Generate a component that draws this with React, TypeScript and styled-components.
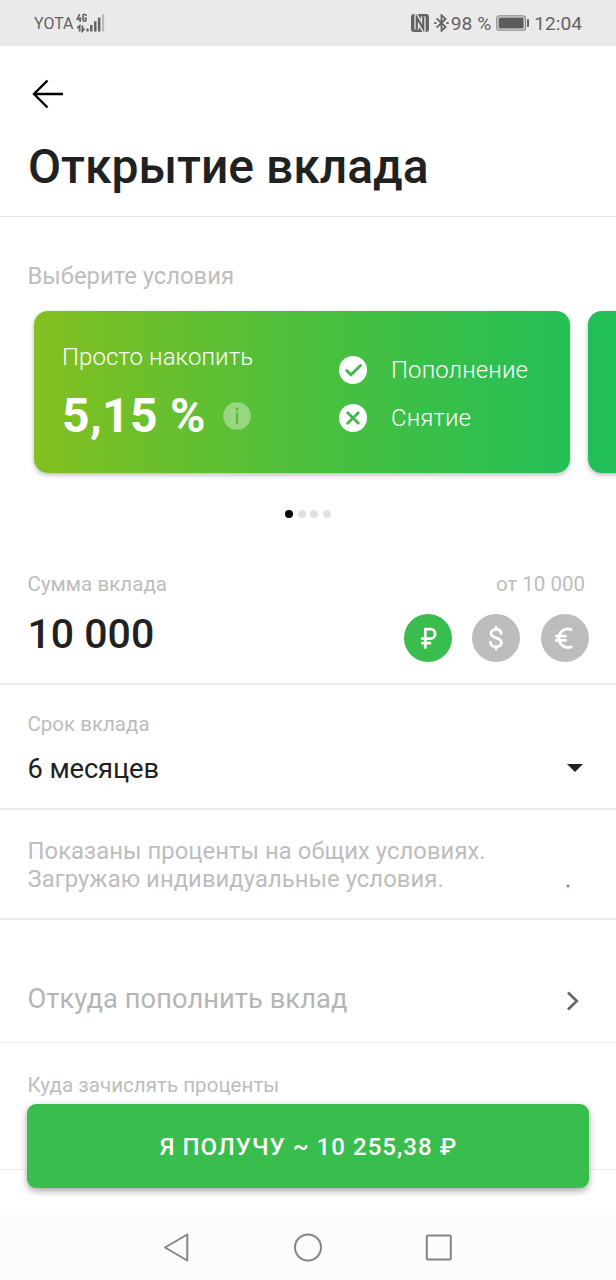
import React from 'react';
import styled, { createGlobalStyle } from 'styled-components';

const GlobalStyle = createGlobalStyle`
  * { box-sizing: border-box; }
  body { margin: 0; background: #fff; font-family: Roboto, "Noto Sans", sans-serif; }
`;

const Screen = styled.div`
  position: relative;
  width: 616px;
  height: 1280px;
  overflow: hidden;
  display: flex;
  flex-direction: column;
  background: #fff;
  color: #212121;
`;

const StatusBar = styled.header`
  height: 46px;
  flex: none;
  display: flex;
  align-items: center;
  justify-content: space-between;
  padding: 0 34px;
  background: #eaeaea;
  color: #636363;
`;

const StatusGroup = styled.div`
  display: flex;
  align-items: center;
`;

const StatusText = styled.span<{ $size: number; $left?: number }>`
  font-size: ${(p) => p.$size}px;
  line-height: 24px;
  margin-left: ${(p) => p.$left ?? 0}px;
  padding-top: 1px;
  white-space: pre;
`;

const SignalIcon = styled.svg`
  margin-left: 2px;
`;

const BluetoothIcon = styled.svg`
  margin-left: 5px;
`;

const BatteryIcon = styled.svg`
  margin-left: 5px;
`;

const Header = styled.div`
  height: 171px;
  flex: none;
  padding: 33px 28px 0;
  border-bottom: 1px solid #e6e6e6;
`;

const BackButton = styled.button`
  display: block;
  border: 0;
  padding: 0;
  margin-left: 4px;
  background: none;
  width: 32px;
  height: 30px;
`;

const Title = styled.h1`
  margin: 30px 0 0;
  font-size: 48px;
  line-height: 56px;
  font-weight: 500;
  white-space: nowrap;
`;

const Caption = styled.div<{ $large?: boolean; $spacing?: number }>`
  font-size: ${(p) => (p.$large ? 23.8 : 20.5)}px;
  line-height: 28px;
  letter-spacing: ${(p) => p.$spacing ?? 0}px;
  color: #bdbdbd;
  white-space: nowrap;
`;

const Hint = styled(Caption)`
  padding-right: 3px;
`;

const Conditions = styled.section`
  height: 330px;
  flex: none;
  padding-top: 45px;
`;

const ConditionsCaption = styled(Caption)`
  padding-left: 27.5px;
`;

const Carousel = styled.div`
  display: flex;
  gap: 17.5px;
  margin-top: 21.3px;
  padding-left: 34px;
`;

const Card = styled.article`
  flex: none;
  width: 536px;
  height: 161.7px;
  border-radius: 14px;
  background: linear-gradient(90deg, #83bf20 0%, #4dbf3c 50%, #24bf56 100%);
  box-shadow: 0 2px 5px rgba(0, 0, 0, 0.28);
  display: flex;
  color: #fff;
`;

const NextCard = styled(Card)`
  background: #22bf58;
`;

const Offer = styled.div`
  width: 305px;
  padding: 31.7px 0 0 28px;
`;

const CardText = styled.div`
  font-size: 24px;
  line-height: 28px;
  font-weight: 300;
  letter-spacing: 0.1px;
  white-space: nowrap;
`;

const RateRow = styled.div`
  display: flex;
  align-items: center;
  gap: 17px;
  margin-top: 17px;
`;

const Rate = styled.span`
  font-size: 48px;
  line-height: 56px;
  font-weight: 700;
  letter-spacing: 0.35px;
  white-space: nowrap;
`;

const Features = styled.div`
  display: flex;
  flex-direction: column;
  gap: 20px;
  padding-top: 44.7px;
`;

const Feature = styled.div`
  display: flex;
  align-items: center;
  gap: 24px;
  height: 28px;
`;

const Dots = styled.div`
  display: flex;
  justify-content: center;
  gap: 4.5px;
  margin-top: 37px;
`;

const Dot = styled.i<{ $active?: boolean }>`
  width: 8px;
  height: 8px;
  border-radius: 50%;
  background: ${(p) => (p.$active ? '#000' : '#e2e2e2')};
`;

const Row = styled.section<{ $height: number; $top: number; $line?: number }>`
  height: ${(p) => p.$height}px;
  flex: none;
  padding: ${(p) => p.$top}px 28px 0 27.5px;
  border-bottom: ${(p) => p.$line ?? 2}px solid #ebebeb;
`;

const Split = styled.div<{ $top?: number; $align?: string }>`
  display: flex;
  justify-content: space-between;
  align-items: ${(p) => p.$align ?? 'center'};
  margin-top: ${(p) => p.$top ?? 0}px;
`;

const Amount = styled.div`
  font-size: 41px;
  line-height: 48px;
  font-weight: 500;
  margin-top: -8px;
`;

const Currencies = styled.div`
  display: flex;
  gap: 20.5px;
  margin-right: -0.8px;
`;

const Currency = styled.button<{ $active?: boolean }>`
  width: 48px;
  height: 48px;
  border: 0;
  padding: 0;
  border-radius: 50%;
  background: ${(p) => (p.$active ? '#39bd4c' : '#bdbdbd')};

  svg {
    display: block;
    fill: none;
    stroke: #fff;
    stroke-width: 2.8;
    stroke-linecap: round;
    stroke-linejoin: round;
  }
`;

const Term = styled.div<{ $muted?: boolean }>`
  font-size: 27.3px;
  line-height: 32px;
  letter-spacing: ${(p) => (p.$muted ? 0.05 : -0.1)}px;
  color: ${(p) => (p.$muted ? '#b5b5b5' : '#212121')};
`;

const DropdownIcon = styled.svg`
  margin: -1px 5px 0 0;
`;

const Loader = styled.svg`
  margin: 0 18.5px 5px 0;
`;

const ChevronIcon = styled.svg`
  margin: 5px 9px 0 0;
`;

const SubmitButton = styled.button`
  position: absolute;
  left: 27px;
  top: 1104px;
  width: 562px;
  height: 83.5px;
  border: 0;
  border-radius: 9px;
  background: #39bd4c;
  box-shadow: 0 3px 7px rgba(0, 0, 0, 0.35);
  color: #fff;
  font: 500 24px/28px Roboto, sans-serif;
  letter-spacing: 1.03px;
  padding: 2px 0 0 1px;
`;

const NavBar = styled.nav`
  height: 65px;
  flex: none;
  margin-top: auto;
  display: flex;
  align-items: center;
  justify-content: center;
  background: #fcfcfc;
`;

export default function App() {
  return (
    <Screen>
      <GlobalStyle />
      <StatusBar>
        <StatusGroup>
          <StatusText $size={16}>YOTA</StatusText>
          <SignalIcon width="30" height="20" viewBox="0 0 30 20">
            <g fill="none" stroke="#636363" strokeWidth="1.6">
              <path d="M3.6 1 1.2 6.2H5.3M4.1 4V9" />
              <path d="M10 3V2.3Q10 1.3 8.5 1.3T7 2.6V6.8Q7 8.2 8.5 8.2T10 7V5.2H8.4" />
            </g>
            <g fill="none" stroke="#636363" strokeWidth="1.8">
              <path d="M3.6 18.5V13L1.2 15M6.4 12.5V18L8.4 15.6" />
            </g>
            <g fill="#636363">
              <rect x="10.4" y="15.5" width="2.3" height="3" />
              <rect x="14" y="12" width="2.5" height="6.5" />
              <rect x="18" y="8.2" width="2.5" height="10.3" />
              <rect x="21.9" y="4.6" width="2.5" height="13.9" />
              <rect x="26" y="1" width="2.2" height="17.5" fill="#bababa" />
            </g>
          </SignalIcon>
        </StatusGroup>
        <StatusGroup>
          <svg width="18" height="18" viewBox="0 0 18 18">
            <rect width="18" height="18" rx="3" fill="#636363" />
            <path fill="none" stroke="#eaeaea" strokeWidth="4.8" d="M5.8 15.5V3.5L12.2 14.5V2.5" />
            <path fill="none" stroke="#636363" strokeWidth="2.2" d="M5.8 15.5V3.5L12.2 14.5V2.5" />
          </svg>
          <BluetoothIcon width="15" height="18" viewBox="0 0 15 18" fill="none" stroke="#636363" strokeWidth="1.8">
            <path d="M2.6 4.4 11.6 13 7.5 16.8V1.2L11.6 5 2.6 13.6" />
            <path d="M.2 9H2.4M12.4 9H14.6" strokeWidth="2" />
          </BluetoothIcon>
          <StatusText $size={19.2} $left={2}>98 %</StatusText>
          <BatteryIcon width="34" height="16" viewBox="0 0 34 16">
            <rect x=".8" y=".8" width="28.6" height="14.4" rx="2.5" fill="none" stroke="#8a8a8a" strokeWidth="1.3" />
            <rect x="2.6" y="2.6" width="25" height="10.8" rx="1" fill="#5c5c5c" />
            <rect x="31" y="4" width="2" height="8" rx=".8" fill="#636363" />
          </BatteryIcon>
          <StatusText $size={19.2} $left={4}>12:04</StatusText>
        </StatusGroup>
      </StatusBar>

      <Header>
        <BackButton aria-label="Назад">
          <svg width="32" height="30" viewBox="0 0 32 30" fill="none" stroke="#000" strokeWidth="2.4">
            <path d="M31 15H2.5M15.5 1.5 2 15 15.5 28.5" />
          </svg>
        </BackButton>
        <Title>Открытие вклада</Title>
      </Header>

      <Conditions>
        <ConditionsCaption $large>Выберите условия</ConditionsCaption>
        <Carousel>
          <Card>
            <Offer>
              <CardText>Просто накопить</CardText>
              <RateRow>
                <Rate>5,15 %</Rate>
                <svg width="28" height="28" viewBox="0 0 28 28">
                  <circle cx="14" cy="14" r="13.8" fill="#fff" fillOpacity=".38" />
                  <circle cx="14" cy="7" r="1.5" fill="#5dbb3a" />
                  <rect x="12.8" y="10.5" width="2.4" height="11.5" fill="#5dbb3a" />
                </svg>
              </RateRow>
            </Offer>
            <Features>
              <Feature>
                <svg width="28" height="28" viewBox="0 0 28 28">
                  <circle cx="14" cy="14" r="14" fill="#fff" />
                  <path d="M7.7 14.5 12 18.8 21.5 9.5" fill="none" stroke="#45b649" strokeWidth="2.8" strokeLinecap="round" />
                </svg>
                <CardText>Пополнение</CardText>
              </Feature>
              <Feature>
                <svg width="28" height="28" viewBox="0 0 28 28">
                  <circle cx="14" cy="14" r="14" fill="#fff" />
                  <path d="M8.7 8.7 19.3 19.3M19.3 8.7 8.7 19.3" fill="none" stroke="#45b649" strokeWidth="2.8" strokeLinecap="round" />
                </svg>
                <CardText>Снятие</CardText>
              </Feature>
            </Features>
          </Card>
          <NextCard />
        </Carousel>
        <Dots>
          <Dot $active />
          <Dot />
          <Dot />
          <Dot />
        </Dots>
      </Conditions>

      <Row $height={138} $top={23}>
        <Split>
          <Caption $spacing={0.04}>Сумма вклада</Caption>
          <Hint>от 10 000</Hint>
        </Split>
        <Split $top={16}>
          <Amount>10 000</Amount>
          <Currencies>
            <Currency $active aria-label="Рубли">
              <svg width="48" height="48" viewBox="0 0 48 48">
                <path d="M21.3 33.5V15.2H26.4A4.7 4.7 0 0 1 26.4 24.7H18.2M18.2 29.2H26" />
              </svg>
            </Currency>
            <Currency aria-label="Доллары">
              <svg width="48" height="48" viewBox="0 0 48 48">
                <path d="M29.2 19.6C29.2 16.8 27 15.4 24.2 15.4S18.9 17 18.9 19.6C18.9 25 29.4 22.8 29.4 28.4C29.4 31.2 27 32.8 24.1 32.8S18.5 31.2 18.5 28.2M24.1 13.3V15.4M24.1 32.8V35" />
              </svg>
            </Currency>
            <Currency aria-label="Евро">
              <svg width="48" height="48" viewBox="0 0 48 48">
                <path d="M30.2 15.5C24.3 13.4 17.9 17.3 17.9 24.2S24.3 35 30.2 32.9M15.2 22.2H24.4M15.2 26.4H24.4" />
              </svg>
            </Currency>
          </Currencies>
        </Split>
      </Row>

      <Row $height={125} $top={25}>
        <Caption>Срок вклада</Caption>
        <Split $top={14.5}>
          <Term>6 месяцев</Term>
          <DropdownIcon width="16" height="8" viewBox="0 0 16 8">
            <path d="M0 0H16L8 8Z" fill="#212121" />
          </DropdownIcon>
        </Split>
      </Row>

      <Row $height={110} $top={27}>
        <Split $align="flex-end">
          <Caption $large $spacing={0.06}>
            Показаны проценты на общих условиях.
            <br />
            Загружаю индивидуальные условия.
          </Caption>
          <Loader width="4" height="4" viewBox="0 0 4 4">
            <circle cx="2" cy="2" r="1.5" fill="#4aa382" />
          </Loader>
        </Split>
      </Row>

      <Row $height={123} $top={62.5} $line={1}>
        <Split>
          <Term $muted>Откуда пополнить вклад</Term>
          <ChevronIcon width="13" height="20" viewBox="0 0 13 20" fill="none" stroke="#666" strokeWidth="2.6">
            <path d="M2 1.5 10.8 10 2 18.5" />
          </ChevronIcon>
        </Split>
      </Row>

      <Row $height={127} $top={28} $line={1}>
        <Caption $spacing={0.05}>Куда зачислять проценты</Caption>
      </Row>

      <SubmitButton>Я ПОЛУЧУ ~ 10 255,38 ₽</SubmitButton>

      <NavBar>
        <svg width="616" height="65" viewBox="0 0 616 65" fill="none" stroke="#858585" strokeWidth="2" strokeLinejoin="round">
          <path d="M187.3 19.5V45.5L165 32.5Z" />
          <circle cx="308" cy="32.5" r="13" />
          <rect x="426.8" y="20.5" width="24" height="24" rx="1" />
        </svg>
      </NavBar>
    </Screen>
  );
}
